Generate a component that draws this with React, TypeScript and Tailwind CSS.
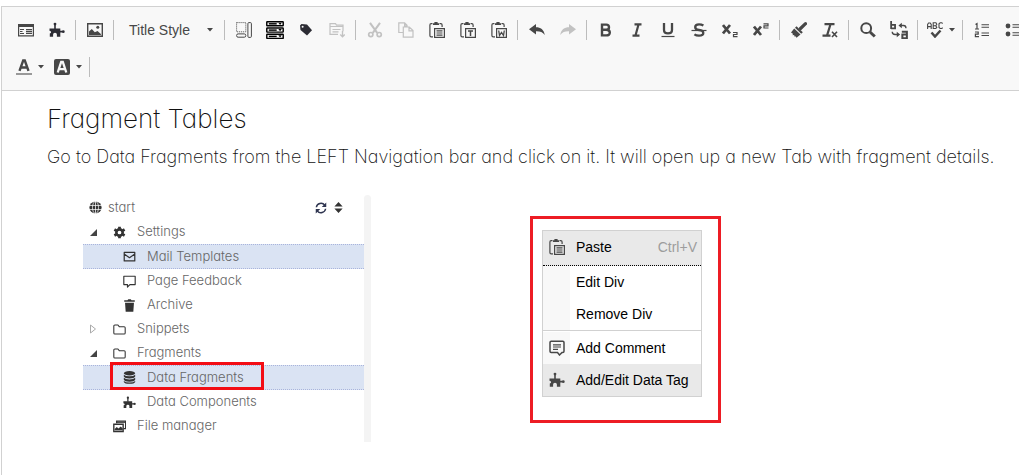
import React from "react";

type IconProps = { children: React.ReactNode; className?: string; size?: string };

function Icon({ children, className = "", size = "size-4" }: IconProps) {
  return (
    <svg viewBox="0 0 16 16" className={`${size} shrink-0 ${className}`} fill="none" stroke="currentColor" aria-hidden="true">
      {children}
    </svg>
  );
}

function PluginShape() {
  return (
    <g fill="currentColor" stroke="none">
      <path d="M.5 6.500h10.800v2.300h2.200v1.800h-2.200v4.200H7.900v-2.300q0-1.700-1.900-1.700t-1.900 1.700v2.300H.8v-3.300q1.300-.3 1.300-1.300T.5 8.800z" />
      <path d="M5.200 2.500h1.600v4.500H5.200z" />
      <circle cx="6" cy="2.100" r="1.400" />
      <circle cx="14.300" cy="9.700" r="1.400" />
    </g>
  );
}

function ClipboardShape({ children }: { children: React.ReactNode }) {
  return (
    <>
      <path d="M3.500 1.700H2.200Q.9 1.700.9 3v10.500q0 1.300 1.300 1.300H4M10.500 1.700h1.300q1.300 0 1.300 1.300v2" strokeWidth="1.200" />
      <path d="M4 3V1.200h1.400V0h3.200v1.200H10V3z" fill="currentColor" stroke="none" />
      <path d="M5.600 6.600h9.800v8.800H5.600z" strokeWidth="1.200" />
      {children}
    </>
  );
}

const pasteLines = <path d="M7.500 8.900h6M7.500 11h6M7.500 13.100h6" strokeWidth="1.100" />;

const templates = (
  <>
    <path d="M.6 2.600h14.800v11.300H.6z" strokeWidth="1.200" />
    <path d="M0 2h16v3H0z" fill="currentColor" stroke="none" />
    <path d="M2 7.500h4M2 9.500h2.500M2 11.500h4M8 7.500h6M8 11.500h6" strokeWidth="1.100" />
    <path d="M8 9.500h6" strokeWidth="1.600" />
  </>
);
const picture = (
  <>
    <path d="M.7 1.700h14.600v12.600H.7z" strokeWidth="1.400" />
    <path d="M2 13V9.500L4.800 7l3 3.300L10.500 9 13.900 12v1z" fill="currentColor" stroke="none" />
    <circle cx="10.800" cy="5.200" r="1.500" fill="currentColor" stroke="none" />
  </>
);
const divBox = (
  <>
    <path d="M.6.600h9.200v9.200H.6z" strokeDasharray="1 1" />
    <rect x="11.900" y=".6" width="3.500" height="14.800" rx="1" />
    <rect x=".6" y="11.900" width="9.200" height="3.300" rx="1.500" />
  </>
);
const rowsIcon = (
  <>
    {[0, 5.600, 11.200].map((y) => (
      <g key={y} transform={`translate(0 ${y})`}>
        <rect x=".7" y=".6" width="14.600" height="3.700" rx=".5" strokeWidth="1.300" />
        <path d="M2.500 2.500h7" strokeWidth="1.300" />
        <path d="M11 1.500h3l-1.500 2z" fill="currentColor" stroke="none" />
      </g>
    ))}
  </>
);
const tag = (
  <>
    <path d="M2 3.500 3.500 2 9 2.500l5 5.700-5 5.300-6.500-5.500z" fill="currentColor" stroke="none" />
    <circle cx="4.600" cy="4.800" r="1" fill="#f8f8f8" stroke="none" />
  </>
);
const insertBox = (
  <>
    <path d="M9 12.400H1V1.700h5.500l1 1.500H14v6M1 4.500h13M3.500 7.500h8M3.500 9.800h6" strokeWidth="1.200" />
    <path d="M13.500 9v5.500M11.300 12.500l2.200 2.300 2.200-2.300" strokeWidth="1.300" />
  </>
);
const cut = (
  <>
    <path d="m3 .8 7.200 10M13 .8l-7.200 10" strokeWidth="2" />
    <circle cx="3.800" cy="12.600" r="2.100" strokeWidth="1.700" />
    <circle cx="12.200" cy="12.600" r="2.100" strokeWidth="1.700" />
  </>
);
const copy = (
  <path d="M5 10.500H.8V.8h5.800L9 3.200v1.500M6.600.8v3H9M5.300 5h6L15 8.500v6.700H5.300zM11 5v3.800h4" strokeWidth="1.200" />
);
const undo = <path d="M0 7.200 7 2v3.200c4.500 0 8 2.300 8.800 7.800C13.500 10 11 9.200 7 9.300v3.200z" fill="currentColor" stroke="none" />;
const redo = <path d="M16 7.200 9 2v3.200C4.500 5.200 1 7.500.2 13 2.500 10 5 9.200 9 9.300v3.200z" fill="currentColor" stroke="none" />;
const bold = <path d="M4 1.500v13M4 2.600h4.200q2.800 0 2.800 2.600T8.200 7.800H4M8.200 7.800q3.600 0 3.600 2.800T8.200 13.400H4" strokeWidth="2.400" />;
const italic = <path d="M5.500 2.300H12.500M3.500 13.700H10.500M9.600 2.300 6.400 13.700" strokeWidth="2.200" />;
const underline = (
  <>
    <path d="M4 1v7q0 3.400 4 3.400t4-3.400V1" strokeWidth="2.300" />
    <path d="M1.500 14.500h13" strokeWidth="1.200" />
  </>
);
const strike = (
  <>
    <path d="M12.400 3.500Q10.500 2.300 8 2.300q-3.800 0-3.800 2.800T8 8q4.300.4 4.300 3T8 13.700q-2.800 0-4.600-1.300" strokeWidth="2.300" />
    <path d="M.5 8.500h15" strokeWidth="1.200" />
  </>
);
const subscript = (
  <>
    <path d="m1 3 7 8.500M8 3 1 11.500" strokeWidth="2.700" />
    <path d="M11 10.500h4v2h-3.500v2.200H15.500" strokeWidth="1.200" />
  </>
);
const superscript = (
  <>
    <path d="m1 4.500 7 8.500M8 4.500 1 13" strokeWidth="2.700" />
    <path d="M10.500 1.800H15v2h-4V6h4.500" strokeWidth="1.200" />
  </>
);
const brush = (
  <>
    <path d="m9.500 6.500 5-4.800" strokeWidth="3.200" strokeLinecap="round" />
    <path d="m5.500 4.300 6.300 6-1.600 1.500-6.200-6z" fill="currentColor" stroke="none" />
    <path d="M3.200 6.600 9.500 12.500l-4 3.200-1-1.500-.8.500-.6-1.800-1.500.4.300-1.600L0 10.500z" fill="currentColor" stroke="none" />
  </>
);
const clearFormat = (
  <>
    <path d="M2.500 2.200h10M.5 13.600h8M8.500 2.200 5 13.600" strokeWidth="2.200" />
    <path d="m10 9.700 5 5.300M15 9.700 10 15" strokeWidth="1.600" />
  </>
);
const search = (
  <>
    <circle cx="6.200" cy="6.200" r="4.900" strokeWidth="2" />
    <path d="m10 10 4.800 4.500" strokeWidth="3" />
  </>
);
const replace = (
  <>
    <path d="M1 0v7M1 3.500h3.500v3H1" strokeWidth="1.600" />
    <path d="M10.500 9.500H15V16M15 12h-4v3.300h4" strokeWidth="1.800" />
    <path d="M9 4h3q2.200 0 2.200 2.500M2 9.500Q2 12 4.500 12H7" strokeWidth="1.200" />
    <path d="m7.500 4 3-2.500v5zM9 12l-3-2.500v5z" fill="currentColor" stroke="none" />
  </>
);
const spell = (
  <>
    <path d="M.6 7V2.500L1.600 1h1.600l1 1.500V7M.6 4.600h3.600M6.200.8v5.700h2.600l1-1-1-1.700 1-1.500-.9-1.500zM6.200 3.800h2.600M15.700 1.500l-1-.7h-1.500l-1.200 1v3.700l1.200 1h1.500l1-.8" strokeWidth="1.100" />
    <path d="m4.500 10.500 3.500 4 5.500-6" strokeWidth="2.500" />
  </>
);
const numbered = (
  <>
    <path d="M1.500 2.500 3 1.600V7M1 7h4M1 10h3.200v2.200H1.400v2.500H5" strokeWidth="1.200" />
    <path d="M7.500 2.800H15M7.500 5.300H15M7.500 11H15M7.500 13.500H15" strokeWidth="1.100" />
  </>
);
const bulleted = (
  <>
    <circle cx="3" cy="4" r="2.400" fill="currentColor" stroke="none" />
    <circle cx="3" cy="12" r="2.400" fill="currentColor" stroke="none" />
    <path d="M7.500 2.800H15M7.500 5.300H15M7.500 10.800H15M7.500 13.300H15" strokeWidth="1.100" />
  </>
);
const textColor = (
  <>
    <path d="M0 15h16" stroke="#999" strokeWidth="2" />
    <path d="M3.500 11.800 7.200 1.500h1.600L12.500 11.800M5 8.500h6" strokeWidth="2.400" />
  </>
);
const bgColor = (
  <>
    <rect width="16" height="16" rx="2" fill="currentColor" stroke="none" />
    <path d="M3.700 13.500 7.200 3h1.600L12.300 13.500M5 10.200h6" stroke="#f8f8f8" strokeWidth="2.300" />
  </>
);
const clipWord = <path d="m7.700 8.500.8 5 2-3 2 3 .8-5" strokeWidth="1.300" />;

function Caret() {
  return (
    <svg viewBox="0 0 6 4" className="h-1 w-1.5 shrink-0 fill-current" aria-hidden="true">
      <path d="M0 0h6L3 3.500z" />
    </svg>
  );
}

function Sep() {
  return <span className="mx-[3px] h-5 w-px shrink-0 bg-[#bcbcbc]" />;
}

type ToolProps = { label: string; children: React.ReactNode; dim?: boolean; size?: string; className?: string };

function Tool({ label, children, dim, size, className = "" }: ToolProps) {
  return (
    <button type="button" aria-label={label} disabled={dim} className={`flex h-7 w-[31px] shrink-0 items-center justify-center ${dim ? "opacity-30" : ""} ${className}`}>
      <Icon size={size}>{children}</Icon>
    </button>
  );
}

function SplitTool({ label, children }: ToolProps) {
  return (
    <button type="button" aria-label={label} className="flex h-7 w-[38px] shrink-0 items-center gap-1.5 pl-1.5">
      <Icon>{children}</Icon>
      <Caret />
    </button>
  );
}

function Toolbar() {
  return (
    <div role="toolbar" className="overflow-hidden border-b border-[#d1d1d1] bg-[#f8f8f8] pt-1 pb-[5px] pl-2 text-[#474747]">
      <div className="flex h-[37px] items-center">
        <Tool label="Templates">{templates}</Tool>
        <Tool label="Data tag" className="text-[#2c2c34]"><PluginShape /></Tool>
        <Sep />
        <Tool label="Image">{picture}</Tool>
        <Sep />
        <button type="button" className="flex h-7 w-[104px] shrink-0 items-center justify-between pr-2 pl-3 text-sm">
          Title Style
          <Caret />
        </button>
        <Sep />
        <Tool label="Div container">{divBox}</Tool>
        <Tool label="Rows" size="size-[18px]" className="text-black">{rowsIcon}</Tool>
        <Tool label="Tag" className="text-[#2c2c34]">{tag}</Tool>
        <Tool label="Insert block" dim>{insertBox}</Tool>
        <Sep />
        <Tool label="Cut" dim>{cut}</Tool>
        <Tool label="Copy" dim>{copy}</Tool>
        <Tool label="Paste"><ClipboardShape>{pasteLines}</ClipboardShape></Tool>
        <Tool label="Paste as text"><ClipboardShape><path d="M8 9h5M10.500 9v5" strokeWidth="1.500" /></ClipboardShape></Tool>
        <Tool label="Paste from Word"><ClipboardShape>{clipWord}</ClipboardShape></Tool>
        <Sep />
        <Tool label="Undo">{undo}</Tool>
        <Tool label="Redo" dim>{redo}</Tool>
        <Sep />
        <Tool label="Bold">{bold}</Tool>
        <Tool label="Italic">{italic}</Tool>
        <Tool label="Underline">{underline}</Tool>
        <Tool label="Strikethrough">{strike}</Tool>
        <Tool label="Subscript">{subscript}</Tool>
        <Tool label="Superscript">{superscript}</Tool>
        <Sep />
        <Tool label="Copy formatting">{brush}</Tool>
        <Tool label="Remove format">{clearFormat}</Tool>
        <Sep />
        <Tool label="Find">{search}</Tool>
        <Tool label="Replace" size="size-[18px]">{replace}</Tool>
        <Sep />
        <SplitTool label="Spell check">{spell}</SplitTool>
        <Sep />
        <Tool label="Numbered list">{numbered}</Tool>
        <Tool label="Bulleted list">{bulleted}</Tool>
      </div>
      <div className="flex h-[37px] items-center">
        <SplitTool label="Text color">{textColor}</SplitTool>
        <SplitTool label="Background color">{bgColor}</SplitTool>
        <Sep />
      </div>
    </div>
  );
}

const globe = (
  <>
    <circle cx="8" cy="8" r="7.500" fill="currentColor" stroke="none" />
    <path d="M0 5.500h16M0 10.500h16M8 0v16" stroke="#fff" strokeWidth=".9" />
    <ellipse cx="8" cy="8" rx="3.700" ry="7.500" stroke="#fff" strokeWidth=".9" />
  </>
);
const gear = (
  <>
    <circle cx="8" cy="8" r="3.900" strokeWidth="3.200" />
    <path d="M8 .8v2.600M8 12.600v2.600M1.700 4.400l2.300 1.300M12 10.300l2.300 1.300M1.700 11.600l2.300-1.300M12 5.700l2.300-1.300" strokeWidth="3.400" />
  </>
);
const mail = <path d="M1.500 3h13v10.500h-13zM1.500 5l6.500 4.500L14.500 5" strokeWidth="1.500" strokeLinejoin="round" />;
const bubble = <path d="M1 1.500h14v10.300H8.500l-3 3v-3H1z" strokeWidth="1.400" strokeLinejoin="round" />;
const trash = <path d="M1.500 1.500h4L6.500.3h3l1 1.200h4v2h-13zM2.500 4.500h11l-.8 11.200H3.300z" fill="currentColor" stroke="none" />;
const folder = <path d="M1 3.800q0-1.300 1.300-1.300H6l1.700 2h6q1.300 0 1.300 1.300v6.400q0 1.300-1.300 1.300H2.300Q1 13.500 1 12.200z" strokeWidth="1.300" />;
const database = (
  <g fill="currentColor" stroke="none">
    <ellipse cx="8" cy="2.800" rx="7" ry="2.700" />
    <path d="M1 4.500q2 2 7 2t7-2v2.400q-1 2.300-7 2.300T1 6.900zM1 8.400q2 2 7 2t7-2v2.400q-1 2.300-7 2.300t-7-2.300zM1 12.200q2 1.900 7 1.900t7-1.900v1.300q-1 2.300-7 2.300t-7-2.300z" />
  </g>
);
const files = (
  <>
    <path d="M4.500 4V1.500h11v9H13" strokeWidth="1.500" />
    <path d="M4 2h11v1.500H4z" fill="currentColor" stroke="none" />
    <path d="M1 5.300h11.500v9H1z" strokeWidth="1.700" />
    <path d="M2 13v-2l2.700-2.500 2 2L9.500 8l2.500 2.500V13z" fill="currentColor" stroke="none" />
  </>
);
const refresh = (
  <>
    <path d="M1.800 7A6.300 6.300 0 0 1 13 4.200M14.200 9A6.300 6.300 0 0 1 3 11.800" strokeWidth="2" />
    <path d="M15 .8v6H9zM1 15.200v-6h6z" fill="currentColor" stroke="none" />
  </>
);
const sorter = <path d="M8 0l6 6.500H2zM8 16l6-6.500H2z" fill="currentColor" stroke="none" />;

type Node = { text: string; icon: React.ReactNode; level: 1 | 2; toggle?: "open" | "closed"; selected?: boolean; marked?: boolean };

const nodes: Node[] = [
  { text: "Settings", icon: gear, level: 1, toggle: "open" },
  { text: "Mail Templates", icon: mail, level: 2, selected: true },
  { text: "Page Feedback", icon: bubble, level: 2 },
  { text: "Archive", icon: trash, level: 2 },
  { text: "Snippets", icon: folder, level: 1, toggle: "closed" },
  { text: "Fragments", icon: folder, level: 1, toggle: "open" },
  { text: "Data Fragments", icon: database, level: 2, selected: true, marked: true },
  { text: "Data Components", icon: <PluginShape />, level: 2 },
  { text: "File manager", icon: files, level: 1 },
];

function TreeRow({ node }: { node: Node }) {
  return (
    <li className={`relative flex items-center pl-[7px] ${node.selected ? "h-[25px] border-y border-dotted border-[#a9b4dc] bg-[#dae3f3]" : "h-6"}`}>
      <span className={`flex shrink-0 ${node.level === 1 ? "w-[23px]" : "w-[33px]"}`}>
        {node.toggle === "open" && (
          <svg viewBox="0 0 7 7" className="size-[7px] fill-[#444]" aria-hidden="true"><path d="M7 0v7H0z" /></svg>
        )}
        {node.toggle === "closed" && (
          <svg viewBox="0 0 6 10" className="h-2.5 w-1.5 fill-none stroke-[#aaa]" aria-hidden="true"><path d="M.5 1v8L5.500 5z" /></svg>
        )}
      </span>
      <span className="flex w-6 shrink-0 text-[#333]">
        <Icon size="size-[13px]">{node.icon}</Icon>
      </span>
      <span>{node.text}</span>
      {node.marked && <span className="absolute -top-1 left-[27px] h-7 w-[154px] border-3 border-[#f30d14]" />}
    </li>
  );
}

function Tree() {
  return (
    <div className="flex text-[13px] text-[#666]">
      <div className="w-[281px] pb-1">
        <div className="flex h-[25px] items-center pr-5 pl-1.5">
          <Icon size="size-[13px]" className="text-[#333]">{globe}</Icon>
          <span className="pl-1.5">start</span>
          <button type="button" aria-label="Refresh" className="ml-auto text-[#2f3550]"><Icon size="size-3">{refresh}</Icon></button>
          <button type="button" aria-label="Sort" className="ml-1.5 text-[#333]"><Icon size="size-[11px]">{sorter}</Icon></button>
        </div>
        <ul>
          {nodes.map((n) => <TreeRow key={n.text} node={n} />)}
        </ul>
      </div>
      <div className="w-[7px] rounded-t-sm bg-[#f4f4f4]" />
    </div>
  );
}

const comment = (
  <>
    <path d="M1 2.500Q1 1.300 2.200 1.300h11.600Q15 1.300 15 2.500v8.800q0 1.200-1.200 1.200H13L10.500 15 8.500 12.500H2.200Q1 12.500 1 11.300z" strokeWidth="1.500" />
    <path d="M4 4.800h8M4 7h8M4 9.300h5" strokeWidth="1.200" />
  </>
);

function MenuItem({ label, icon, hint, active }: { label: string; icon?: React.ReactNode; hint?: string; active?: boolean }) {
  return (
    <button type="button" role="menuitem" className={`flex h-8 w-full items-stretch text-left ${active ? "bg-[#e9e9e9]" : "bg-white"}`}>
      <span className={`flex w-[27px] shrink-0 items-center justify-center text-[#474747] ${active ? "" : "bg-[#f8f8f8]"}`}>
        {icon && <Icon>{icon}</Icon>}
      </span>
      <span className="grow self-center pl-1.5">{label}</span>
      {hint && <span className="self-center pr-1 text-[#9d9d9d]">{hint}</span>}
    </button>
  );
}

function ContextMenu() {
  return (
    <div className="w-[191px] border-3 border-[#ed1c24] pt-[11px] pr-4 pb-[23px] pl-[9px]">
      <div role="menu" className="border border-[#d1d1d1] text-sm text-black">
        <div className="border-b border-dotted border-black bg-[#e9e9e9] pb-0.5">
          <MenuItem label="Paste" hint="Ctrl+V" active icon={<ClipboardShape>{pasteLines}</ClipboardShape>} />
        </div>
        <MenuItem label="Edit Div" />
        <MenuItem label="Remove Div" />
        <div className="border-t border-[#d1d1d1] pt-px">
          <MenuItem label="Add Comment" icon={comment} />
          <MenuItem label="Add/Edit Data Tag" icon={<PluginShape />} active />
        </div>
      </div>
    </div>
  );
}

export default function App() {
  return (
    <div className="min-h-screen overflow-hidden bg-white pt-1.5 pl-px font-['Liberation_Sans',sans-serif]">
      <div className="flex min-h-[469px] flex-col border-t border-l border-[#d1d1d1]">
        <Toolbar />
        <main className="pt-3 pl-[45px] font-['Inter',sans-serif] font-extralight [font-feature-settings:'cv11'] text-[#111]">
          <h1 className="text-[26px] leading-8">Fragment Tables</h1>
          <p className="pt-2 text-lg leading-7">
            Go to Data Fragments from the LEFT Navigation bar and click on it. It will open up a new Tab with fragment details.
          </p>
          <div className="flex gap-[159px] pt-6 pl-9 font-light">
            <Tree />
            <div className="pt-[21px] font-['Liberation_Sans',sans-serif] font-normal">
              <ContextMenu />
            </div>
          </div>
        </main>
      </div>
    </div>
  );
}
